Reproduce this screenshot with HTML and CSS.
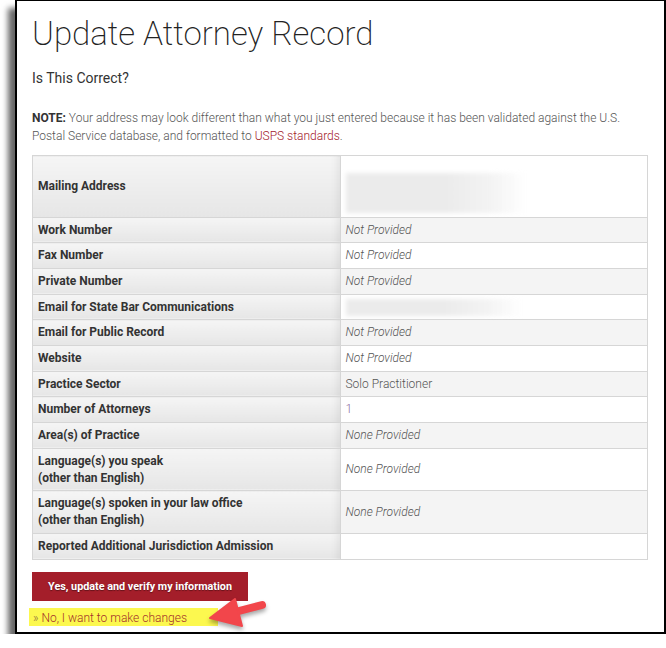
FILE: index.html
```html
<!DOCTYPE html>
<html lang="en">
<head>
    <meta charset="UTF-8">
    <meta name="viewport" content="width=device-width, initial-scale=1.0">
    <title>Update Attorney Record</title>
    <link rel="stylesheet" href="styles.css">
</head>
<body>
    <div class="frame">
        <h1>Update Attorney Record</h1>
        <h2>Is This Correct?</h2>
        <p class="note"><strong>NOTE:</strong> Your address may look different than what you just entered because it has been validated against the U.S. Postal Service database, and formatted to <a href="#">USPS standards</a>.</p>

        <table class="record">
            <tr>
                <th>Mailing Address</th>
                <td><div class="blur blur-address"></div></td>
            </tr>
            <tr class="alt">
                <th>Work Number</th>
                <td><em>Not Provided</em></td>
            </tr>
            <tr>
                <th>Fax Number</th>
                <td><em>Not Provided</em></td>
            </tr>
            <tr class="alt">
                <th>Private Number</th>
                <td><em>Not Provided</em></td>
            </tr>
            <tr>
                <th>Email for State Bar Communications</th>
                <td><div class="blur blur-email"></div></td>
            </tr>
            <tr class="alt">
                <th>Email for Public Record</th>
                <td><em>Not Provided</em></td>
            </tr>
            <tr>
                <th>Website</th>
                <td><em>Not Provided</em></td>
            </tr>
            <tr class="alt">
                <th>Practice Sector</th>
                <td>Solo Practitioner</td>
            </tr>
            <tr>
                <th>Number of Attorneys</th>
                <td><span class="count">1</span></td>
            </tr>
            <tr class="alt">
                <th>Area(s) of Practice</th>
                <td><em>None Provided</em></td>
            </tr>
            <tr>
                <th>Language(s) you speak<br>(other than English)</th>
                <td><em>None Provided</em></td>
            </tr>
            <tr class="alt">
                <th>Language(s) spoken in your law office<br>(other than English)</th>
                <td><em>None Provided</em></td>
            </tr>
            <tr>
                <th>Reported Additional Jurisdiction Admission</th>
                <td></td>
            </tr>
        </table>

        <button class="confirm">Yes, update and verify my information</button>
        <div class="changes"><a href="#"><span class="raquo">&raquo;</span> No, I want to make changes</a></div>

        <svg class="arrow" width="64" height="40" viewBox="0 0 64 40">
            <line x1="30" y1="16" x2="57" y2="9" stroke="#f2464b" stroke-width="8" stroke-linecap="round"/>
            <polygon points="5,22 30,3 37,30" fill="#f2464b" stroke="#f2464b" stroke-width="2" stroke-linejoin="round"/>
        </svg>
    </div>
</body>
</html>
```
FILE: styles.css
```css
body {
    margin: 0;
    background: #fff;
    font-family: Roboto, "Liberation Sans", sans-serif;
    color: #333;
}

.frame {
    position: relative;
    box-sizing: border-box;
    margin-left: 15px;
    width: 651px;
    height: 634px;
    border: 2px solid #000;
    border-top-width: 1px;
    padding: 0 15px;
    background: #fff;
    box-shadow: -7px 8px 6px rgba(0, 0, 0, 0.6);
}

h1 {
    margin: 0;
    padding-top: 13px;
    font-size: 33px;
    line-height: 40px;
    font-weight: 200;
    color: #222;
}

h2 {
    margin: 14px 0 0;
    font-size: 14px;
    line-height: 20px;
    font-weight: 400;
    color: #333;
}

.note {
    margin: 21px 0 10px;
    font-size: 12px;
    line-height: 18px;
    font-weight: 300;
    color: #555;
}

.note strong {
    font-weight: 700;
    color: #333;
}

.note a {
    color: #a3202c;
    text-decoration: none;
}

.record {
    width: 616px;
    border-collapse: collapse;
    border: 1px solid #cfcfcf;
    font-size: 12px;
    line-height: 17px;
}

.record th,
.record td {
    width: 50%;
    padding: 4px 5px 3.67px;
    border: 1px solid #d6d6d6;
    text-align: left;
    vertical-align: middle;
}

.record th {
    font-weight: 700;
    color: #333;
    background: linear-gradient(to bottom, #f5f5f5, #e6e6e6);
    box-shadow: inset -10px 0 8px -8px rgba(0, 0, 0, 0.08);
}

.record td {
    font-weight: 300;
    color: #555;
    background: #fff;
}

.record tr.alt td {
    background: #f4f4f4;
}

.record em {
    font-style: italic;
}

.count {
    color: #8a6a9e;
}

.blur {
    background: linear-gradient(to right, #ebebeb 55%, #f3f3f3 80%, rgba(255, 255, 255, 0));
    filter: blur(2px);
}

.blur-address {
    width: 180px;
    height: 40px;
    margin: 13px 0 0;
}

.blur-email {
    width: 176px;
    height: 17px;
}

.confirm {
    display: block;
    margin-top: 12px;
    width: 216px;
    height: 29px;
    border: 0;
    padding: 0;
    background: #a41e2a;
    color: #fff;
    font-family: Roboto, "Liberation Sans", sans-serif;
    font-size: 10.8px;
    font-weight: 700;
    text-shadow: 0 1px 1px rgba(0, 0, 0, 0.4);
    cursor: pointer;
}

.changes {
    margin: 7px 0 0 -3px;
    width: 189px;
    height: 18px;
    background: #fcf84f;
    font-size: 12px;
    line-height: 21px;
    font-weight: 300;
}

.changes a {
    padding-left: 4px;
    color: #a4302a;
    text-decoration: none;
}

.raquo {
    color: #8c6a40;
}

.arrow {
    position: absolute;
    left: 188px;
    top: 595px;
    filter: drop-shadow(0 3px 2px rgba(0, 0, 0, 0.35));
}
```
